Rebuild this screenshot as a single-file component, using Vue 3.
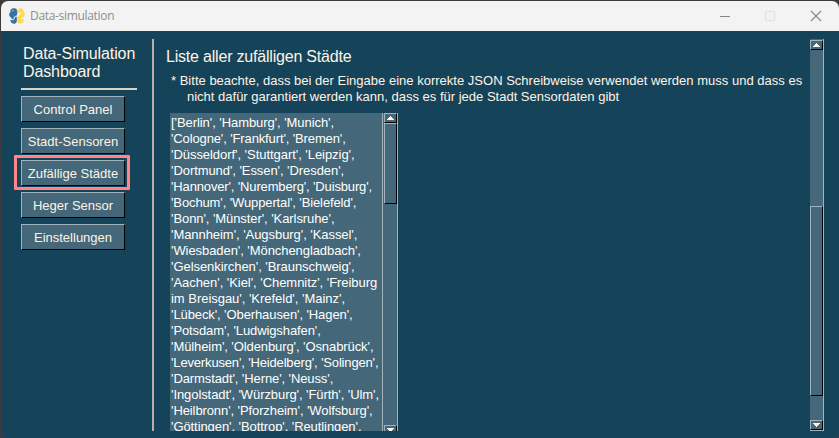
<script setup>
const nav = [
  { label: 'Control Panel' },
  { label: 'Stadt-Sensoren' },
  { label: 'Zufällige Städte', active: true },
  { label: 'Heger Sensor' },
  { label: 'Einstellungen' },
]
// Each row of the list with its tracking in pixels
const lines = [
  ["['Berlin', 'Hamburg', 'Munich',", -0.07],
  ["'Cologne', 'Frankfurt', 'Bremen',", -0.13],
  ["'Düsseldorf', 'Stuttgart', 'Leipzig',", -0.05],
  ["'Dortmund', 'Essen', 'Dresden',", -0.07],
  ["'Hannover', 'Nuremberg', 'Duisburg',", -0.15],
  ["'Bochum', 'Wuppertal', 'Bielefeld',", -0.12],
  ["'Bonn', 'Münster', 'Karlsruhe',", -0.08],
  ["'Mannheim', 'Augsburg', 'Kassel',", -0.06],
  ["'Wiesbaden', 'Mönchengladbach',", -0.07],
  ["'Gelsenkirchen', 'Braunschweig',", -0.06],
  ["'Aachen', 'Kiel', 'Chemnitz', 'Freiburg", -0.05],
  ["im Breisgau', 'Krefeld', 'Mainz',", -0.03],
  ["'Lübeck', 'Oberhausen', 'Hagen',", -0.1],
  ["'Potsdam', 'Ludwigshafen',", -0.1],
  ["'Mülheim', 'Oldenburg', 'Osnabrück',", -0.09],
  ["'Leverkusen', 'Heidelberg', 'Solingen',", -0.16],
  ["'Darmstadt', 'Herne', 'Neuss',", -0.1],
  ["'Ingolstadt', 'Würzburg', 'Fürth', 'Ulm',", -0.08],
  ["'Heilbronn', 'Pforzheim', 'Wolfsburg',", -0.1],
  ["'Göttingen', 'Bottrop', 'Reutlingen',", -0.08],
].map(([text, track]) => ({ text, track }))
</script>

<template>
  <div class="desktop">
    <div class="window">
      <header class="titlebar">
        <svg class="logo" width="16" height="16" viewBox="0 0 16 16">
          <g stroke-width=".6" stroke-linejoin="round">
            <path fill="#3672a4" stroke="#3672a4" d="M2.2 1.4Q3.4.4 5.6.5Q8 .7 8 3V5.8Q8 7.6 6.2 8Q4.4 8.4 4.2 10V11Q2.6 11 2.3 9.4Q.4 8.8.4 6.5Q.4 4.6 2 4.1H4.4V3.6H1.6Q1.5 2 2.2 1.4Z" />
            <path fill="#3672a4" stroke="#3672a4" d="M1.6 12.3H4.6Q5.6 12.2 5.6 10.6Q5.8 9.2 7.5 8.9V13.4Q7.3 15.5 5 15.4Q1.9 15.4 1.6 12.3Z" />
            <path fill="#ffd94d" stroke="#ffd94d" d="M9.1 3Q9.3.5 11.6.5Q14.4.6 14.3 3.6Q15.6 4.4 15.5 6.8Q15.2 9 13 9.6Q11.5 9.9 11.5 11.6H14.5Q14.4 15.2 11.6 15.5Q8.6 15.5 8.6 12.8V9.8Q8.7 8.2 10.4 7.8Q12 7.4 11.9 5.6V4.2H9.1Z" />
          </g>
          <circle cx="4" cy="2.3" r=".6" fill="#d7e3eb" />
          <circle cx="12" cy="13.5" r=".6" fill="#fff5cc" />
        </svg>
        <span class="caption">Data-simulation</span>
        <svg class="controls" width="102" height="12" viewBox="0 0 102 12">
          <path d="M0 6.5H10" stroke="#858585" />
          <rect x="45.5" y="1.5" width="9" height="9" rx="1" fill="none" stroke="#dedede" />
          <path d="M91 1L101 11M101 1L91 11" stroke="#858585" stroke-width="1.1" />
        </svg>
      </header>
      <div class="body">
        <aside class="sidebar">
          <h1>Data-Simulation<br />Dashboard</h1>
          <nav>
            <div v-for="n in nav" :key="n.label" class="item" :class="{ active: n.active }">
              <button>{{ n.label }}</button>
            </div>
          </nav>
        </aside>
        <main>
          <h2>Liste aller zufälligen Städte</h2>
          <p class="note">* Bitte beachte, dass bei der Eingabe eine korrekte JSON Schreibweise verwendet werden muss und dass es</p>
          <p class="note second">nicht dafür garantiert werden kann, dass es für jede Stadt Sensordaten gibt</p>
          <div class="listbox">
            <div class="lines">
              <div v-for="l in lines" :key="l.text" class="line" :style="{ letterSpacing: l.track + 'px' }">{{ l.text }}</div>
            </div>
            <div class="scroll inner">
              <div class="arrow"><svg width="7" height="4" viewBox="0 0 7 4" shape-rendering="crispEdges"><path d="M3 0h1v1h1v1h1v1h1v1H0V3h1V2h1V1h1z" fill="#fff3e6" /></svg></div>
              <div class="thumb"></div>
              <div class="trough"></div>
              <div class="arrow"><svg width="7" height="4" viewBox="0 0 7 4" shape-rendering="crispEdges"><path d="M0 0h7v1H6v1H5v1H4v1H3V3H2V2H1V1H0z" fill="#fff3e6" /></svg></div>
            </div>
          </div>
        </main>
        <div class="scroll outer">
          <div class="arrow"><svg width="7" height="4" viewBox="0 0 7 4" shape-rendering="crispEdges"><path d="M3 0h1v1h1v1h1v1h1v1H0V3h1V2h1V1h1z" fill="#fff3e6" /></svg></div>
          <div class="trough"></div>
          <div class="thumb"></div>
          <div class="gap"></div>
          <div class="arrow"><svg width="7" height="4" viewBox="0 0 7 4" shape-rendering="crispEdges"><path d="M0 0h7v1H6v1H5v1H4v1H3V3H2V2H1V1H0z" fill="#fff3e6" /></svg></div>
        </div>
      </div>
    </div>
  </div>
</template>

<style>
body { margin: 0; background: #3d3a3b; overflow: hidden; }
</style>

<style scoped>
* { box-sizing: border-box; }
.desktop { width: 839px; height: 438px; padding: 1px 0 0 1px; background: #3d3a3b; font-family: "Liberation Sans", Arial, sans-serif; color: #fff3e6; }
.window { height: 437px; border-radius: 7px 7px 5px 5px; overflow: hidden; background: #15445a; }
.titlebar { height: 30px; background: #f3f3f3; display: flex; align-items: center; padding: 0 17px 0 8px; }
.logo { flex: none; }
.caption { margin-left: 5px; font: 12px/16px "Open Sans", sans-serif; letter-spacing: -0.32px; color: #8e8e8e; flex: 1; }
.controls { display: block; flex: none; }
.body { display: flex; height: 407px; padding: 8px 0 0 20px; }
.sidebar { width: 133px; height: 392px; border-right: 2px solid #b9aeac; flex: none; padding-top: 6px; }
h1, h2 { margin: 0; font-size: 16px; font-weight: 400; line-height: 18px; white-space: nowrap; }
h1 { width: 116px; height: 45px; padding-left: 2px; border-bottom: 2px solid #d9d3c8; letter-spacing: -0.11px; }
h2 { letter-spacing: -0.2px; }
nav { padding-top: 6px; display: flex; flex-direction: column; gap: 6px; }
.item { position: relative; width: 104px; height: 26px; }
.active::after { content: ""; position: absolute; inset: -5px -5px -4px -7px; border: 3px solid #ff8589; border-radius: 1px; }
button { display: block; width: 104px; height: 26px; padding: 1px 0 0; background: #446779; border: 1px solid; border-color: #a1b3bc #000 #000 #a1b3bc; color: #fff3e6; font: 13px/24px "Liberation Sans", Arial, sans-serif; }
main { flex: none; width: 655px; height: 392px; padding: 9px 0 0 12px; overflow: hidden; }
.note { margin: 0; padding-left: 5px; font-size: 13px; line-height: 16px; white-space: nowrap; }
h2 + .note { margin-top: 7px; letter-spacing: .01px; }
.second { padding-left: 21px; }
.listbox { display: flex; margin: 8px 0 0 4px; width: 228px; height: 318px; background: #446779; }
.lines { width: 212px; padding: 2px 0 0 1px; overflow: hidden; }
.line { font-size: 13px; height: 16px; line-height: 16px; white-space: nowrap; color: #fff; }
.scroll { display: flex; flex-direction: column; background: #446779; }
.arrow { flex: none; height: 10px; display: flex; align-items: center; justify-content: center; border: 1px solid; border-color: #a1b3bc #000 #000 #a1b3bc; }
.thumb { flex: none; border: 1px solid; border-color: #a1b3bc #000 #000 #a1b3bc; }
.inner { width: 16px; height: 322px; border-left: 1px solid #a1b3bc; border-right: 1px solid #a1b3bc; padding-left: 1px; }
.inner .thumb { height: 81px; }
.inner .trough { flex: 1; }
.outer { flex: none; width: 14px; height: 392px; border-right: 1px solid #a1b3bc; border-bottom: 1px solid #a1b3bc; margin-left: 1px; padding-top: 1px; }
.outer .trough { height: 156px; }
.outer .thumb { height: 190px; }
.outer .gap { flex: 1; }
</style>
